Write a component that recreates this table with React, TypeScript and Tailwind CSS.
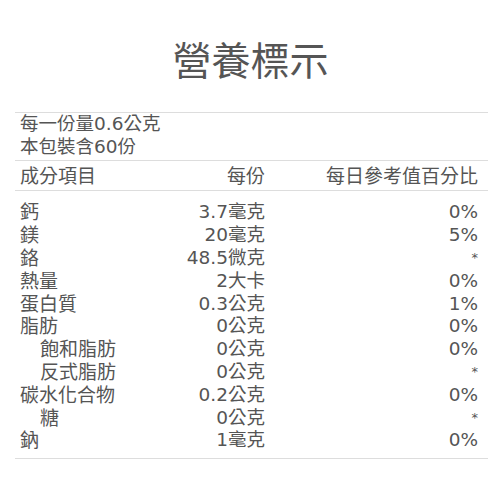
import React from 'react';

type Row = { name: string; amount: string; daily: string; indent?: boolean };

const rows: Row[] = [
  { name: '鈣', amount: '3.7毫克', daily: '0%' },
  { name: '鎂', amount: '20毫克', daily: '5%' },
  { name: '鉻', amount: '48.5微克', daily: '*' },
  { name: '熱量', amount: '2大卡', daily: '0%' },
  { name: '蛋白質', amount: '0.3公克', daily: '1%' },
  { name: '脂肪', amount: '0公克', daily: '0%' },
  { name: '飽和脂肪', amount: '0公克', daily: '0%', indent: true },
  { name: '反式脂肪', amount: '0公克', daily: '*', indent: true },
  { name: '碳水化合物', amount: '0.2公克', daily: '0%' },
  { name: '糖', amount: '0公克', daily: '*', indent: true },
  { name: '鈉', amount: '1毫克', daily: '0%' },
];

export default function App() {
  return (
    <div
      className="w-[501px] h-[501px] bg-white text-[#555555] overflow-hidden"
      style={{ fontFamily: '"DejaVu Sans", "Noto Sans CJK TC", sans-serif' }}
    >
      <h1 className="pt-[42px] mb-[31px] text-center text-[39px] leading-none font-normal">營養標示</h1>

      <div className="ml-[15px] w-[473px] text-[19px] leading-[22.8px]">
        <div className="border-t border-[#dddddd] pl-[5px] pb-[1px]">
          <div className="text-[18.5px]">每一份量0.6公克</div>
          <div className="text-[18.5px]">本包裝含60份</div>
        </div>

        <div className="grid grid-cols-[150px_95px_1fr] border-t border-b border-[#dddddd] pl-[5px] pr-[10px] pt-[4px] pb-[3px]">
          <div>成分項目</div>
          <div className="text-right">每份</div>
          <div className="text-right">每日參考值百分比</div>
        </div>

        <div className="grid grid-cols-[150px_95px_1fr] border-b border-[#dddddd] pl-[5px] pr-[10px] pt-[10px] pb-[6px]">
          {rows.map((r) => (
            <React.Fragment key={r.name}>
              <div className={r.indent ? 'pl-[20px]' : ''}>{r.name}</div>
              <div className="text-right text-[18.5px]">{r.amount}</div>
              <div className={r.daily === '*' ? 'text-right text-[13px]' : 'text-right text-[18.5px]'}>{r.daily}</div>
            </React.Fragment>
          ))}
        </div>
      </div>
    </div>
  );
}
